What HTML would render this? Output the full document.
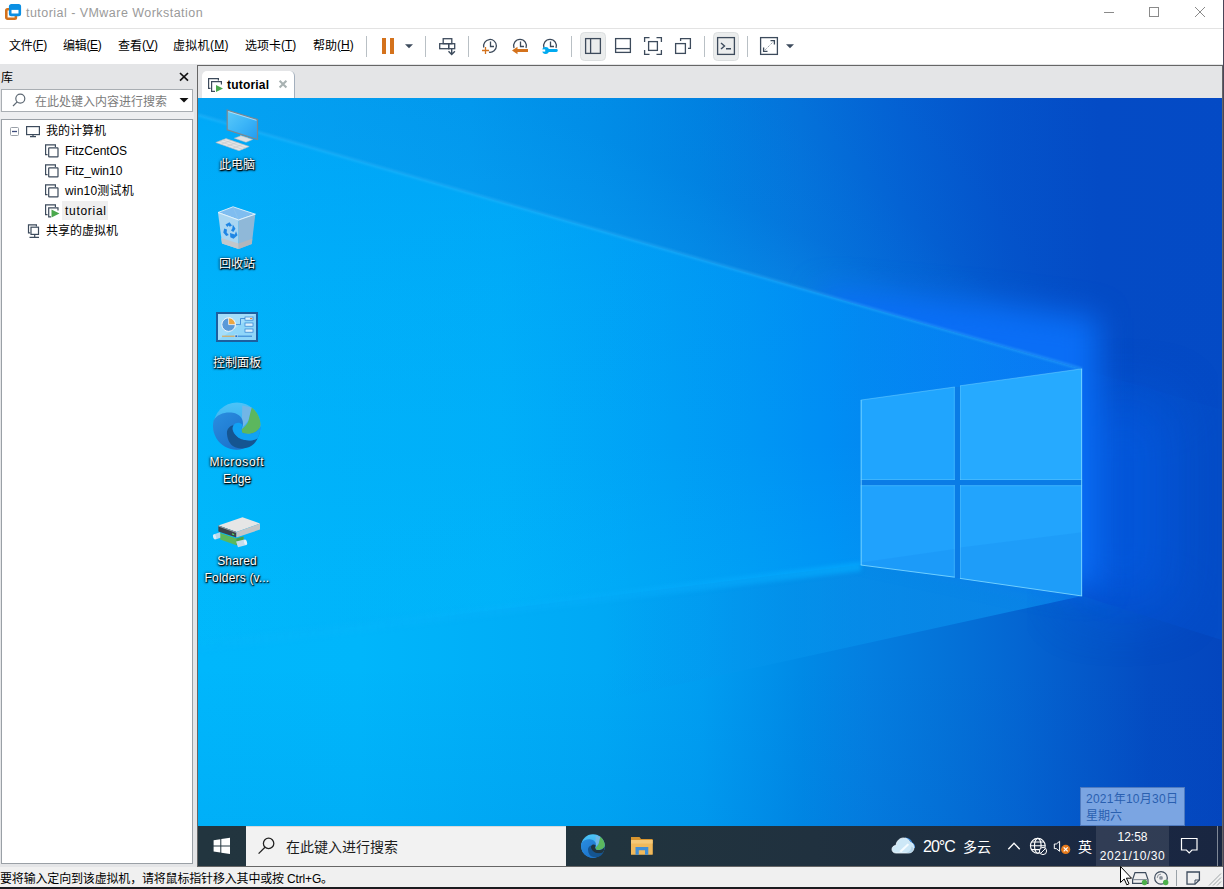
<!DOCTYPE html>
<html lang="zh-CN">
<head>
<meta charset="utf-8">
<title>tutorial - VMware Workstation</title>
<style>
*{box-sizing:border-box;margin:0;padding:0}
html,body{width:1224px;height:889px;overflow:hidden;background:#fff}
body{position:relative;font-family:"Liberation Sans","Noto Sans CJK SC",sans-serif;font-size:12px;color:#000}
.abs{position:absolute}
.t{position:absolute;white-space:nowrap;line-height:1}
#titlebar{left:0;top:0;width:1223px;height:28px;background:#fff}
#titleline{left:0;top:28px;width:1223px;height:1px;background:#e3e3e3}
#menubar{left:0;top:29px;width:1223px;height:35px;background:#fff}
#grayarea{left:0;top:64px;width:1223px;height:803px;background:#e4e5e7}
#rightedge{left:1223px;top:0;width:1px;height:889px;background:#4a4558}
#bottomedge{left:0;top:887px;width:1224px;height:2px;background:#1c1c20}
.menu{top:40px;font-size:12px;color:#000}
.lat{position:relative;top:-1.500px}
.sep{position:absolute;top:36px;width:1px;height:21px;background:#b9c0c5}
/* sidebar */
#treepanel{left:1px;top:119px;width:192px;height:745px;background:#fff;border:1px solid #9aa0a6}
#searchbox{left:1px;top:89px;width:192px;height:23px;background:#fff;border:1px solid #a9aeb3}
.tree{font-size:12px;color:#000}
/* vm panel */
#vmpanel{left:197px;top:65px;width:1026px;height:802px;border:1px solid #666;background:#e4e5e7}
#tab{left:202px;top:71px;width:93px;height:27px;background:#fff;border-radius:5px 5px 0 0;border-right:1px solid #a3afbd}
#vm{left:198px;top:98px;width:1024px;height:768px;overflow:hidden;background:#0090e8}
#statusbar{left:0;top:867px;width:1223px;height:20px;background:#f0f0f0}
.dlabel{position:absolute;white-space:nowrap;color:#fff;font-size:12px;line-height:17px;text-align:center;text-shadow:1px 1px 1px #000,0 1px 2px #000,0 0 3px rgba(0,0,0,.8)}
</style>
</head>
<body>
<div id="titlebar" class="abs"></div>
<div id="titleline" class="abs"></div>
<div id="menubar" class="abs"></div>
<div id="grayarea" class="abs"></div>
<div id="vmpanel" class="abs"></div>
<div id="tab" class="abs"></div>
<div id="vm" class="abs">
<div class="abs" id="wbase" style="left:0;top:0;width:1024px;height:768px;background:linear-gradient(180deg,rgba(0,110,235,.22) 0,rgba(0,110,235,.15) 11%,rgba(0,110,235,.05) 26%,rgba(0,110,235,0) 42%),linear-gradient(90deg,#00b2fa 0,#00aef9 13%,#00acf8 29.500%,#00a4f6 39%,#0096f4 54%,#008ef4 61.700%,#028af2 64.700%,#0a78f4 86.200%,#044dc8 86.400%,#044cc6 100%)"></div><div class="abs" style="left:0;top:0;width:884px;height:768px;background:linear-gradient(90deg,rgba(0,200,255,.14) 0,rgba(0,200,255,.1) 35%,rgba(0,200,255,0) 70%),linear-gradient(180deg,rgba(0,200,255,0) 45%,rgba(0,200,255,.16) 64%)"></div>
<div class="abs" id="wtop" style="left:0;top:0;width:1024px;height:768px;clip-path:polygon(0 0,1024px 0,1024px 312px,884px 271px,0 17px);background:conic-gradient(from 0deg at 884px 271px,rgba(0,60,190,.12) 0deg,rgba(0,60,190,.1) 106deg,rgba(0,60,190,0) 250deg,rgba(20,170,250,.22) 286deg,rgba(10,150,240,.1) 296deg,rgba(0,100,220,0) 312deg,rgba(0,60,190,.1) 336deg,rgba(0,60,190,.12) 360deg),linear-gradient(90deg,#00a0f0 0.0%,#009cee 12.9%,#0097ec 26.6%,#008ce6 39.3%,#0080e0 49.0%,#0472da 58.8%,#0463d4 68.6%,#0456cc 78.3%,#044dc6 88.1%,#044cc6 100.0%)"></div>
<div class="abs" id="wbot" style="left:0;top:0;width:1024px;height:768px;clip-path:polygon(0 548px,663px 467px,884px 498px,1024px 542px,1024px 768px,0 768px);background:linear-gradient(180deg,rgba(0,60,180,0) 74%,rgba(0,60,180,.08) 100%),linear-gradient(90deg,#00b7fc 0,#00b6fb 15.800%,#00a9f5 39%,#009ef1 49%,#0094ec 54%,#008ae6 58.800%,#047ee0 65.600%,#0472d8 73.400%,#0466d2 80%,#0456c8 88%,#044cc2 93%,#0446be 100%)"></div>
<div class="abs" id="wwedge" style="left:0;top:0;width:1024px;height:768px;clip-path:polygon(0 548px,663px 467px,884px 498px,0 692px);background:linear-gradient(90deg,rgba(0,160,240,0) 0,rgba(0,160,240,0) 40%,rgba(6,150,238,.5) 60%,rgba(12,140,236,.85) 86%)"></div>
<svg class="abs" style="left:0;top:0" width="1024" height="768" viewBox="198 98 1024 768">
<defs>
<linearGradient id="streak" x1="198" x2="861" y1="0" y2="0" gradientUnits="userSpaceOnUse"><stop offset="0" stop-color="#10b8ff" stop-opacity=".1"/><stop offset=".6" stop-color="#08b0ff" stop-opacity=".3"/><stop offset="1" stop-color="#04acff" stop-opacity=".7"/></linearGradient>
<filter id="blur1" color-interpolation-filters="sRGB" x="-5%" y="-5%" width="110%" height="110%"><feGaussianBlur color-interpolation-filters="sRGB" stdDeviation="1"/></filter>
<filter id="blur2" color-interpolation-filters="sRGB" x="-5%" y="-50%" width="110%" height="200%"><feGaussianBlur color-interpolation-filters="sRGB" stdDeviation="2"/></filter>
<filter id="blur30" color-interpolation-filters="sRGB" x="-50%" y="-50%" width="200%" height="200%"><feGaussianBlur color-interpolation-filters="sRGB" stdDeviation="28"/></filter>
<filter id="blur16" color-interpolation-filters="sRGB" x="-50%" y="-50%" width="200%" height="200%"><feGaussianBlur color-interpolation-filters="sRGB" stdDeviation="15"/></filter>
<clipPath id="nobeam"><path d="M198 98H1222V866H198V646L861 565L1082 596V369L198 115Z"/></clipPath>
</defs>
<g clip-path="url(#nobeam)"><rect x="1075" y="400" width="95" height="205" fill="#0458dc" opacity=".95" filter="url(#blur30)"/><path d="M820 290L1000 305L1098 318V588L1060 583L861 540Z" fill="#0a6ef6" filter="url(#blur16)"/></g>
<path d="M198 115L1082 369" stroke="#40c0ff" stroke-opacity=".34" stroke-width="3" fill="none" filter="url(#blur1)"/>
<path d="M861 562L861 571L198 652V641Z" fill="url(#streak)" filter="url(#blur2)"/>
<path d="M954 387H961V578H954ZM860 479.500H1082.500V485.700H860Z" fill="#0a7ce6"/>
<g>
<path d="M860.700 400.100L954.800 387V480H860.700Z" fill="#20a5fe"/>
<path d="M960 385.800L1082.100 368.800V480H960Z" fill="#26aaff"/>
<path d="M860.700 485.200H954.800V577.200L860.700 565Z" fill="#20a2fd"/>
<path d="M960 485.200H1082.100V596L960 578.400Z" fill="#22a4fd"/>
<path d="M860.700 562.600L954.800 549V577.200L860.700 565ZM960 547.400L1082.100 532.300V596L960 578.400Z" fill="#0064dc" fill-opacity=".1"/>
<path d="M860.700 400.100L954.800 387M960 385.800L1082.100 368.800" stroke="#7fd6ff" stroke-opacity=".45" stroke-width="1" fill="none"/>
<path d="M861.200 400.100V565M1081.600 368.800V596M860.700 565L954.800 577.200M960 578.400L1082.100 596" stroke="#7fd8ff" stroke-opacity=".85" stroke-width="1" fill="none"/>
<path d="M954.300 387V480M960.500 385.800V480M954.300 485.200V577.200M960.500 485.200V578.400M860.700 479.500H954.800M960 479.500H1082.100M860.700 485.700H954.800M960 485.700H1082.100" stroke="#7fd6ff" stroke-opacity=".3" stroke-width="1" fill="none"/>
</g>
</svg>

<svg class="abs" style="left:0;top:0" width="1024" height="768" viewBox="198 98 1024 768">
<defs>
<linearGradient id="scr" x1="0" y1="0" x2="1" y2="1"><stop offset="0" stop-color="#5ccafa"/><stop offset=".5" stop-color="#3db6f8"/><stop offset="1" stop-color="#239cf0"/></linearGradient>
<linearGradient id="edg1" x1="0" y1="0" x2="0" y2="1"><stop offset="0" stop-color="#4cc4f8"/><stop offset="1" stop-color="#2a9ae6"/></linearGradient>
<linearGradient id="edg2" x1="0" y1="0" x2="1" y2="1"><stop offset="0" stop-color="#2a8ee0"/><stop offset="1" stop-color="#1668c4"/></linearGradient>
</defs>
<!-- this pc -->
<g>
<path d="M227.200 110.100L257.500 119.500V139.500L227.200 129.800Z" fill="url(#scr)" stroke="#7d8790" stroke-width="1.200"/>
<path d="M228.300 111.600L256.400 120.300" stroke="#e8f4fb" stroke-width=".6" fill="none"/>
<path d="M240 135.200L248 137.700V139.500L240 137Z" fill="#b8bcc0"/>
<path d="M234.300 138.200L241 135.800L252.700 139.500L246 142.300Z" fill="#dfe1e3" stroke="#b4b8bc" stroke-width=".5"/>
<path d="M215.800 142.500L226 138.600L249.200 146.500L239 150.700Z" fill="#e4e5e6" stroke="#b8bcc0" stroke-width=".6"/>
<path d="M219.200 141.200L242.400 149.300M222.600 139.900L245.800 147.900M221 144.300L231.200 140.400M226.800 146.300L237 142.400M232.600 148.300L242.800 144.400" stroke="#c2c6ca" stroke-width=".6" fill="none"/>
</g>
<!-- recycle bin -->
<g>
<path d="M218 212.500L233 206.800L255.300 214.200L238.600 220Z" fill="#7fbdf0" stroke="#d4ecfa" stroke-width="1"/>
<path d="M233 206.800L238.600 220" stroke="#8cc4ee" stroke-width=".8"/>
<path d="M218 212.500L238.600 220V248.900L222 243.600Z" fill="#a9d6f2"/>
<path d="M238.600 220L255.300 214.200L251.800 244L238.600 248.900Z" fill="#8fb8d8"/>
<path d="M221.200 238L238.600 243.500V248.900L222 243.600Z" fill="#c3c7cb"/>
<path d="M238.600 243.500L252.300 238.800L251.800 244L238.600 248.900Z" fill="#b2b6bc"/>
<path d="M218 212.500L238.600 220L255.300 214.200" fill="none" stroke="#e0f2fc" stroke-width="1"/>
<g fill="#1f86e4"><path d="M225.500 224.500L229.500 222.300L232 225.500L229.800 226.800L228.600 225.400L227.300 227Z"/><path d="M232.800 224.600L235.500 228.800L233.300 232L231 230.500L232.300 228.600Z"/><path d="M224.200 228.500L227 229.500L226.600 232.500L228.800 235L226.200 236L223.300 232.400Z"/><path d="M230 233L234.800 234.500L236 231.200L237.500 235.200L233.600 238.700L230.300 237.200Z"/></g>
</g>
<!-- control panel -->
<g>
<rect x="217" y="313" width="40" height="28" fill="#8fd6f9" stroke="#1d5f9f" stroke-width="2"/>
<path d="M218 340V314H256Z" fill="#b4e4fb" opacity=".55"/>
<circle cx="228.600" cy="324.600" r="6.800" fill="#5a9ad8" stroke="#f4f8fb" stroke-width="1"/>
<path d="M228.600 324.600V317.800A6.800 6.800 0 0 1 235.400 324.600Z" fill="#eba743" stroke="#f4f8fb" stroke-width=".8"/>
<path d="M236 324.600H240.500V318.500H245" fill="none" stroke="#2f7fd0" stroke-width=".8"/>
<g fill="#dff2fc" stroke="#2f7fd0" stroke-width=".7"><rect x="245" y="317" width="8" height="3.200"/><rect x="245" y="323" width="8" height="3.200"/><rect x="245" y="329" width="8" height="3.200"/></g>
<path d="M250 318.600H252.200" stroke="#e08a2c" stroke-width="1"/>
<path d="M222 336.200H235" stroke="#e5a040" stroke-width="1"/><path d="M237 336.200H252" stroke="#2f7fd0" stroke-width="1"/>
<rect x="235" y="335" width="2.400" height="2.400" fill="#1d6fc4" stroke="#e8f4fb" stroke-width=".5"/>
</g>
<!-- edge desktop -->
<g color="#10a3f4"><g id="edgeicon">
<circle cx="237" cy="426" r="23.600" fill="url(#edg1)"/>
<path d="M242.300 405.500L251.800 407.600L248.600 420.300L243.300 426.700L241.800 422.400Z" fill="#72b6e6"/>
<path d="M251.800 407.600A23.600 23.600 0 0 1 260.500 424C260.500 427 259 429.500 257.100 430.900C253 434 246 434.500 242.300 433L241.200 429.800C245 427 247.500 424 248.600 420.300C249.600 416 250.500 412 251.800 407.600Z" fill="#5cb75e"/>
<path d="M213.700 420.300C217 414 226 411.500 233 412.800C240 414.200 243.800 419 242.800 425L241.200 429.800L242.300 433C247 435 253.500 434 257.100 430.900C259 429.500 260.300 428 260.500 426A23.600 23.600 0 0 1 257.600 438.300L243 448.800A23.600 23.600 0 0 1 213.700 420.300Z" fill="url(#edg2)"/>
<path d="M233.800 425.100C229 426 226.500 430 227 434C227.500 441 231 446 236 447.600C241 449.200 247 448.700 251.500 445.800C254.500 443.800 256.500 441 257.600 438.300C254 440.500 249 441 245 440C239 438.500 234.500 435 232.800 430.500C232.200 428.500 232.600 426.500 233.800 425.100Z" fill="#155591"/>
<path d="M233.800 425.100C235.500 422.500 239.500 421.800 242.300 424.500L241.200 429.800L242.300 433C244 435.500 247 438 250 439.500C247 440.500 243 440 240 438.500C236 436.500 232.500 432 232.800 428C232.900 426.800 233.200 425.900 233.800 425.100Z" fill="currentColor"/>
<path d="M241.200 429.800L242.300 433C247 435 253.500 434 257.100 430.900C259 429.500 260.300 428 260.500 426A23.600 23.600 0 0 1 257.600 438.300C254 440.500 249 441 245 440C241 438.800 237.500 436 235.500 432.500C234.500 430 235 427 237 425.500Z" fill="currentColor"/>
</g></g>
<!-- shared folders -->
<g>
<path d="M213.500 534.500L220 532.300L222 537.200L215.500 539.400Z" fill="#b8d8ec"/><ellipse cx="214.600" cy="536.900" rx="1.500" ry="2.600" fill="#d8ecf8" transform="rotate(-20 214.600 536.900)"/>
<path d="M220.300 533L236.400 538.600L243.500 536.500V541.500L236.400 545.300L220.300 539.600Z" fill="#5cb85c"/>
<path d="M236.400 538.600L243.500 536.500V541.500L236.400 545.300Z" fill="#4aa04c"/>
<path d="M236 541.500L244.500 539.500L246.500 545L238 547.200Z" fill="#c4dcec"/><ellipse cx="245.500" cy="542.300" rx="1.500" ry="2.800" fill="#e4f2fa" transform="rotate(-18 245.500 542.300)"/>
<path d="M218.400 525.400L242.500 517.200L260 523.500L236.400 532Z" fill="#e6e6e6"/>
<path d="M218.400 525.400L236.400 532V537.500L218.400 531.500Z" fill="#3b4149"/>
<path d="M218.400 525.400L236.400 532V533L218.400 526.400Z" fill="#9aa0a6"/>
<path d="M236.400 532L260 523.500V529.600L236.400 537.500Z" fill="#c4c6c8"/>
<path d="M232 533.200L234.200 534L234.200 535.200L232 534.400Z" fill="#5ee05e"/>
</g>
</svg>
<div class="dlabel" style="left:-3px;top:59px;width:84px">此电脑</div>
<div class="dlabel" style="left:-3px;top:158px;width:84px">回收站</div>
<div class="dlabel" style="left:-3px;top:257px;width:84px">控制面板</div>
<div class="dlabel" style="left:-3px;top:356px;width:84px;letter-spacing:.68px">Microsoft</div>
<div class="dlabel" style="left:-3px;top:373px;width:84px">Edge</div>
<div class="dlabel" style="left:-3px;top:455px;width:84px;letter-spacing:.17px">Shared</div>
<div class="dlabel" style="left:-3px;top:472px;width:84px;letter-spacing:.18px">Folders (v...</div>

<div class="abs" id="taskbar" style="left:0;top:728px;width:1024px;height:40px;background:linear-gradient(90deg,#22353f 0,#21343e 40%,#20313f 60%,#1e2e40 75%,#1a2842 88%,#192641 100%)"></div>
<div class="abs" style="left:48px;top:728px;width:320px;height:40px;background:#f2f2f2;border-top:1px solid #d8dadb"></div>
<div class="abs" style="left:898px;top:728px;width:73px;height:40px;background:rgba(255,255,255,.1)"></div>
<div class="abs" style="left:1019px;top:728px;width:1px;height:40px;background:#7f8896"></div>
<svg class="abs" style="left:0;top:728px" width="1024" height="40" viewBox="198 826 1024 40">
<path d="M213.600 840.200L220.300 839.200V845.400H213.600ZM221.300 839.050L230 837.700V845.400H221.300ZM213.600 846.400H220.300V852.600L213.600 851.600ZM221.300 846.400H230V854.100L221.300 852.750Z" fill="#fff"/>
<circle cx="268.600" cy="843.400" r="5.200" fill="none" stroke="#222" stroke-width="1.300"/><path d="M265 847.200L258.600 853.600" stroke="#222" stroke-width="1.300"/>
<!-- edge small -->
<g color="#21343e" transform="translate(593 846) scale(.5) translate(-237 -426)"><use href="#edgeicon"/></g>
<!-- explorer -->
<path d="M631 837H639.500L641 839H652.600V854.600H631Z" fill="#d8952f"/>
<path d="M631 840H652.600V854.600H631Z" fill="#f0b95c"/>
<path d="M631 840H652.600V843.500H631Z" fill="#f4c878"/>
<path d="M635.500 847H648.300V854.800H645V850.300H638.800V854.800H635.500Z" fill="#3f8fd8"/>
<!-- weather -->
<path d="M905 838.300C908 838.600 910.800 840.500 911.600 842.800C913.300 843.600 914.500 845.500 914.300 848" fill="none" stroke="#3f8fe2" stroke-width="1.400"/>
<path d="M896 853C893.500 853 892 851.300 892 849.200C892 847 893.800 845.400 896 845.600C896.300 841.300 899.500 838 903.500 838C906.500 838 909 839.800 910.200 842.300C912.500 842.800 914 845 914 847.500C914 850.600 911.600 853 908.800 853Z" fill="#cde8f7" stroke="#f2faff" stroke-width=".8"/>
<path d="M905.500 853C909 852.500 911.500 850 911.200 846.500C912.800 847 913.600 848 913.600 848.500C913.400 851 911.500 853 908.800 853Z" fill="#b4d4ea"/>
<path d="M899.300 851.200L907.600 843.400L909.200 844.800L901.300 852.300Z" fill="#f6fcff"/>
<!-- chevron -->
<path d="M1008.300 849.200L1014 843.200L1019.700 849.200" fill="none" stroke="#fff" stroke-width="1.300"/>
<!-- globe -->
<g fill="none" stroke="#fff" stroke-width="1.100"><circle cx="1037.800" cy="845.800" r="7.400"/><ellipse cx="1037.800" cy="845.800" rx="3.300" ry="7.400"/><path d="M1030.400 845.800H1045.200M1031.500 842H1044.100M1031.500 849.600H1040"/></g>
<circle cx="1043" cy="851" r="3.600" fill="#1c2a41" stroke="#fff" stroke-width="1"/><path d="M1040.600 853.400L1045.400 848.600" stroke="#fff" stroke-width="1"/>
<!-- speaker -->
<path d="M1054.300 844H1056.300L1059.600 841.300V851.300L1056.300 848.600H1054.300Z" fill="none" stroke="#fff" stroke-width="1"/>
<circle cx="1065.700" cy="849.400" r="4.600" fill="#e67a1c"/><path d="M1063.700 847.400L1067.700 851.400M1067.700 847.400L1063.700 851.400" stroke="#fff" stroke-width="1.200"/>
<!-- notification -->
<path d="M1181.500 838.500H1197V850H1192L1189.200 852.800L1186.400 850H1181.500Z" fill="none" stroke="#fff" stroke-width="1.200"/>
</svg>
<div class="t" style="left:88px;top:742px;font-size:14px;color:#1c1c1c">在此键入进行搜索</div>
<div class="t" style="left:725px;top:741px;font-size:16px;color:#fff;letter-spacing:-1px">20°C</div>
<div class="t" style="left:765px;top:742px;font-size:14px;color:#fff">多云</div>
<div class="t" style="left:880px;top:742px;font-size:14px;color:#fff">英</div>
<div class="t" style="left:898px;top:733px;width:73px;text-align:center;font-size:12px;color:#fff">12:58</div>
<div class="t" style="left:898px;top:752px;width:73px;text-align:center;font-size:12px;letter-spacing:.54px;color:#fff">2021/10/30</div>
<div class="abs" style="left:882px;top:689px;width:105px;height:39px;background:#7ba5e2;border:1px solid #4f7bc0"></div>
<div class="t" style="left:888px;top:695px;font-size:12px;letter-spacing:.25px;color:#2a60b0">2021年10月30日</div>
<div class="t" style="left:888px;top:712px;font-size:12px;color:#2a60b0">星期六</div>

</div>
<svg class="abs" style="left:4px;top:3px" width="19" height="19" viewBox="0 0 19 19">
<rect x="2.3" y="6.2" width="9.6" height="9.6" rx="1.2" fill="none" stroke="#d4721c" stroke-width="2.6"/>
<rect x="6.2" y="2.3" width="9.6" height="9.6" rx="1.2" fill="#fff" stroke="#0b8fe3" stroke-width="2.6"/>
<rect x="6.200" y="2.300" width="9.600" height="4.600" fill="#0b8fe3"/>
</svg>
<div class="t" id="ttl" style="left:26px;top:7px;font-size:12.500px;letter-spacing:.46px;color:#9a9a9a">tutorial - VMware Workstation</div>
<svg class="abs" style="left:1090px;top:0" width="130" height="28" viewBox="0 0 130 28" fill="none" stroke="#8a8a8a" stroke-width="1">
<path d="M14 12.5H24"/>
<rect x="59.5" y="7.5" width="9" height="9"/>
<path d="M105 7L115 17M115 7L105 17"/>
</svg>

<div class="t menu" style="left:9px;letter-spacing:-.3px">文件<span class="lat">(<u>F</u>)</span></div>
<div class="t menu" style="left:63px;letter-spacing:-.3px">编辑<span class="lat">(<u>E</u>)</span></div>
<div class="t menu" style="left:118px">查看<span class="lat">(<u>V</u>)</span></div>
<div class="t menu" style="left:173px;letter-spacing:.3px">虚拟机<span class="lat">(<u>M</u>)</span></div>
<div class="t menu" style="left:245px">选项卡<span class="lat">(<u>T</u>)</span></div>
<div class="t menu" style="left:313px">帮助<span class="lat">(<u>H</u>)</span></div>
<svg class="abs" style="left:360px;top:29px" width="450" height="36" viewBox="360 29 450 36" fill="none" stroke="#3d4b5c" stroke-width="1.3">
<rect x="580.5" y="32.5" width="25" height="28" rx="4" fill="#ebeded" stroke="#dcdfe0" stroke-width="1"/>
<rect x="713.5" y="32.5" width="25" height="28" rx="4" fill="#ebeded" stroke="#dcdfe0" stroke-width="1"/>
<rect x="382" y="38" width="4" height="16" fill="#d4721c" stroke="none"/>
<rect x="390" y="38" width="4" height="16" fill="#d4721c" stroke="none"/>
<path d="M405 44.3H413L409 48.3Z" fill="#3d4b5c" stroke="none"/>
<path d="M786 44.3H794L790 48.3Z" fill="#3d4b5c" stroke="none"/>
<!-- send cad -->
<rect x="443.2" y="38.7" width="8.6" height="5"/>
<rect x="439.7" y="43.7" width="9" height="5"/>
<rect x="448.7" y="43.7" width="6" height="5"/>
<path d="M451.7 49V54M448.5 51.3L451.7 54.5L454.9 51.3" stroke-width="1.4"/>
<!-- snapshot -->
<path d="M483.8 47.5A6.4 6.4 0 1 1 489 52.2"/>
<path d="M490.5 41.5V46.5H494"/>
<path d="M485.5 47V54M482 50.5H489" stroke="#d4721c" stroke-width="1.3"/>
<!-- revert -->
<path d="M514 48A6.4 6.4 0 1 1 526 48"/>
<path d="M520.5 41.5V46.5H524"/>
<path d="M512 50.5L517.5 46.8V49.1H528V51.9H517.5V54.2Z" fill="#d4721c" stroke="none"/>
<!-- manage -->
<path d="M544 48A6.4 6.4 0 1 1 556 48"/>
<path d="M550.5 41.5V46.5H554"/>
<path d="M546 49.1H556.4A1.4 1.4 0 0 1 556.4 51.9H546Z" fill="#00aaf0" stroke="none"/><circle cx="545.6" cy="50.5" r="3.4" fill="#00aaf0" stroke="none"/><path d="M541.5 49.4H545.2V51.6H541.5Z" fill="#fff" stroke="none"/>
<!-- library -->
<rect x="585.6" y="38.6" width="14.8" height="14.8"/>
<path d="M590.6 38.6V53.4"/>
<!-- thumbnail bar -->
<rect x="615.6" y="38.6" width="14.8" height="13.8"/>
<path d="M615.6 48.6H630.4"/>
<!-- fullscreen -->
<rect x="648.6" y="41.6" width="8.8" height="8.8"/>
<path d="M644.6 42V37.6H649.5M656.5 37.6H661.4V42M661.4 50V54.4H656.5M649.5 54.4H644.6V50"/>
<!-- unity -->
<rect x="675.6" y="43.6" width="9.8" height="9.8"/>
<path d="M680.6 41V38.6H690.4V48.4H688"/>
<!-- console -->
<rect x="717.6" y="37.6" width="16.8" height="16.8"/>
<path d="M721 43L724.5 46L721 49M726 48.8H731" stroke-width="1.4"/>
<!-- stretch -->
<rect x="760.6" y="37.6" width="16.8" height="16.8"/>
<path d="M770.5 40.6H774.4V44.5M763.6 47.5V51.4H767.5"/>
<path d="M773.5 41.5L764.5 50.5" stroke="#8a949e" stroke-width="1" stroke-dasharray="1.2 1"/>
</svg>
<div class="sep" style="left:366px"></div>
<div class="sep" style="left:425px"></div>
<div class="sep" style="left:468px"></div>
<div class="sep" style="left:571px"></div>
<div class="sep" style="left:704px"></div>
<div class="sep" style="left:747px"></div>

<div class="t" style="left:1px;top:72px;font-size:12px">库</div>
<svg class="abs" style="left:178px;top:71px" width="12" height="12" viewBox="0 0 12 12"><path d="M2 2L10 9.6M10 2L2 9.6" stroke="#111" stroke-width="1.7" fill="none"/></svg>
<div class="abs" style="left:0;top:112px;width:194px;height:7px;background:#edeef0"></div>
<div id="searchbox" class="abs"></div>
<svg class="abs" style="left:10px;top:92px" width="18" height="18" viewBox="10 92 18 18" fill="none" stroke="#5d6873" stroke-width="1.2"><circle cx="20.3" cy="98.6" r="4.5"/><path d="M17.2 101.8L13 106"/></svg>
<div class="t" style="left:35px;top:96px;font-size:12px;color:#7b7b7b">在此处键入内容进行搜索</div>
<svg class="abs" style="left:178px;top:96px" width="12" height="8" viewBox="0 0 12 8"><path d="M1.5 2H10.5L6 6.5Z" fill="#111"/></svg>
<div id="treepanel" class="abs"></div>
<svg class="abs" style="left:8px;top:122px" width="56" height="120" viewBox="8 122 56 120" fill="none" stroke="#3d4b5c" stroke-width="1.2">
<rect x="10.5" y="127.5" width="8" height="8" rx="1" stroke="#9aa0a8" stroke-width="1" fill="#fff"/>
<path d="M12 131.500H17" stroke="#3d4b7c" stroke-width="1.300"/>
<rect x="26.6" y="126.6" width="12.8" height="8"/>
<path d="M33 134.6V136.4M30 136.6H36"/>
<g id="vmi"><path d="M55.400 147V144.900H45.600V154.600H47.500"/><path d="M45.6 154.4H47" stroke="none"/><rect x="48.700" y="147.800" width="9.300" height="9.100" rx=".5"/></g>
<use href="#vmi" y="20"/>
<use href="#vmi" y="40"/>
<path d="M55.400 207V204.900H45.600V214.600H47.500M58 210.500V207.800H48.700V216.900H51"/>
<path d="M51.500 209.500L59.500 213.500L51.500 217.500Z" fill="#4aa84c" stroke="none"/>
<path d="M36.400 226.500V224.800H28.500V232.800H30.300"/><rect x="31" y="227.200" width="7.500" height="7.200" fill="#fff"/><path d="M34.700 234.400V237.400M29.500 237.400H39"/>
</svg>
<div class="abs" style="left:62px;top:201px;width:46px;height:19px;background:#efefef"></div>
<div class="t tree" style="left:46px;top:125px">我的计算机</div>
<div class="t tree" style="left:65px;top:145px">FitzCentOS</div>
<div class="t tree" style="left:65px;top:165px">Fitz_win10</div>
<div class="t tree" style="left:65px;top:185px;letter-spacing:.2px">win10测试机</div>
<div class="t tree" style="left:65px;top:205px;letter-spacing:.7px">tutorial</div>
<div class="t tree" style="left:46px;top:225px">共享的虚拟机</div>

<svg class="abs" style="left:206px;top:76px" width="20" height="18" viewBox="206 76 20 18" fill="none" stroke="#3d4b5c" stroke-width="1.2">
<path d="M218.400 80.500V78.600H208.600V88.400H210.500M221.400 84.500V81.600H211.600V91.400H215"/>
<path d="M216 85L223 88.500L216 92Z" fill="#4aa84c" stroke="none"/></svg>
<div class="t" style="left:227px;top:79px;font-size:12px;font-weight:bold;letter-spacing:.2px;color:#000">tutorial</div>
<svg class="abs" style="left:277px;top:79px" width="12" height="11" viewBox="0 0 12 11"><path d="M2.600 1.800L9.400 8.600M9.400 1.800L2.600 8.600" stroke="#a8b2b2" stroke-width="2.100" fill="none"/></svg>

<div id="statusbar" class="abs"></div>
<div class="t" style="left:0;top:873px;font-size:12px;letter-spacing:-.17px;color:#000">要将输入定向到该虚拟机，请将鼠标指针移入其中或按 Ctrl+G。</div>
<svg class="abs" style="left:1115px;top:862px" width="108" height="26" viewBox="1115 862 108 26" fill="none" stroke="#3d4b5c" stroke-width="1.2">
<path d="M1135 872.600H1145.600L1148 879.500V883.400H1132.600V879.500Z"/>
<path d="M1133 879.600H1147.500" stroke="#8a929c"/>
<circle cx="1144.500" cy="882.500" r="2.700" fill="#4cb04a" stroke="none"/>
<circle cx="1161" cy="877.900" r="6.300"/>
<circle cx="1161" cy="877.900" r="1.900" fill="#8a929c" stroke="none"/>
<path d="M1157.200 877.900A3.800 3.800 0 0 1 1161 874.100" stroke="#8a929c" stroke-width="1"/>
<circle cx="1165.700" cy="882.500" r="2.700" fill="#4cb04a" stroke="none"/>
<path d="M1176.500 870V886" stroke="#9aa2a8" stroke-width="1"/>
<path d="M1187 872H1199.400V880L1195 884.200H1187Z" stroke-width="1.300"/>
<path d="M1199.400 880H1195V884.200" stroke-width="1"/>
<path d="M1209 885.500L1221 873.500M1213 885.500L1221 877.500M1217 885.500L1221 881.500" stroke="#a0a6a8" stroke-width="1"/>
<path d="M1120.500 866.500V882.500L1124.200 879L1126.800 884.800L1129 883.800L1126.400 878.200H1131.500Z" fill="#fff" stroke="#000" stroke-width="1"/>
</svg>

<div id="rightedge" class="abs"></div>
<div id="bottomedge" class="abs"></div>
</body>
</html>
